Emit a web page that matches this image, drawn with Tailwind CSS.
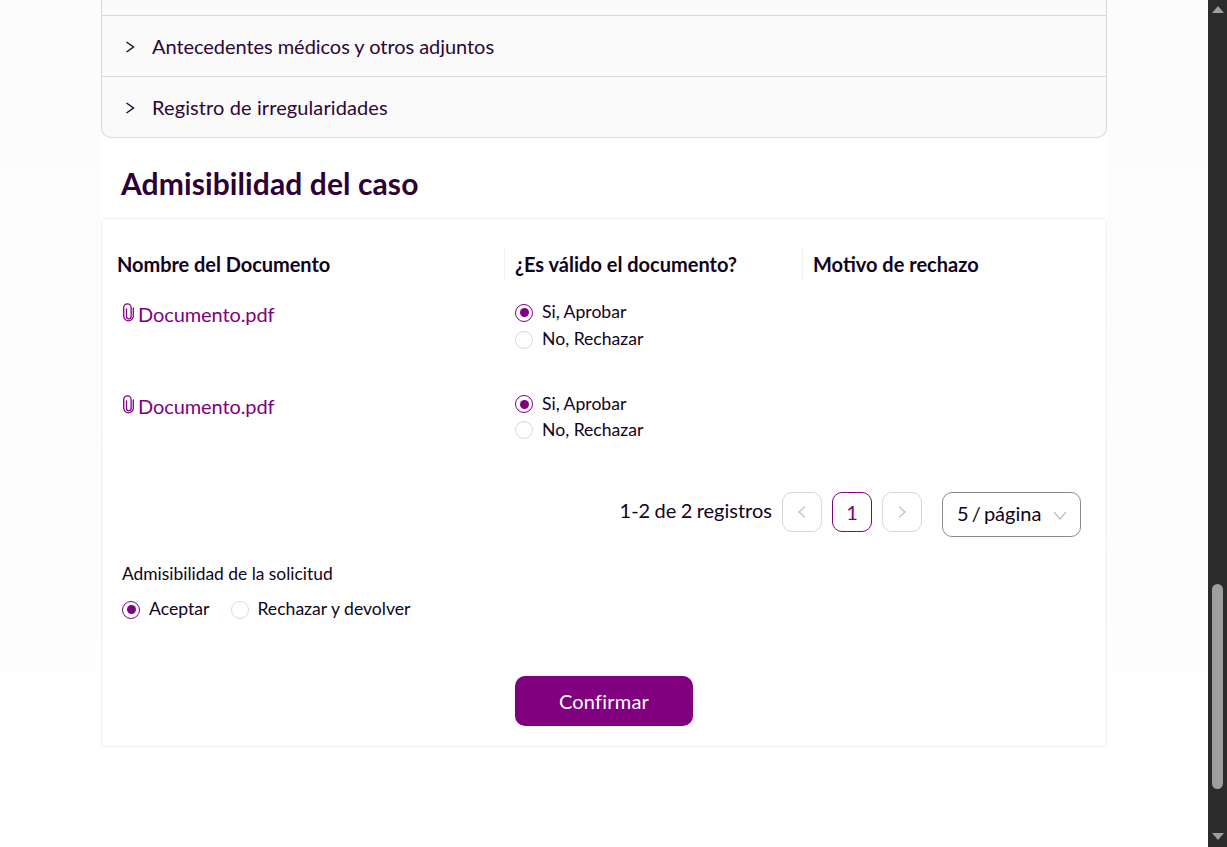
<!DOCTYPE html>
<html lang="es">
<head>
<meta charset="utf-8">
<script src="https://cdn.jsdelivr.net/npm/@tailwindcss/browser@4"></script>
</head>
<body class="overflow-hidden bg-white font-['Lato',sans-serif]">
<div class="flex h-[847px] w-[1227px]">
  <main class="h-full w-[1208px] pl-[101px] bg-gradient-to-b from-[#fcfcfc] via-[#fdfdfd] via-60% to-white">
    <div class="w-[1006px] bg-white">
      <section class="h-[138px] rounded-b-[10px] border border-t-0 border-[#d9d9d9] bg-[#fafafa] text-[20px] text-[#2d0636]">
        <div class="h-[16px] border-b border-[#d9d9d9]"></div>
        <div class="flex h-[61px] items-center border-b border-[#d9d9d9] pl-[22px]">
          <svg class="mr-[16px] mt-[2px] h-3 w-3 text-[#1f1030]" viewBox="0 0 12 12" fill="none" stroke="currentColor" stroke-width="1.5"><path d="M2.5 1 9.5 6 2.5 11"/></svg>
          <span class="tracking-[-0.05px]">Antecedentes médicos y otros adjuntos</span>
        </div>
        <div class="flex h-[60px] items-center pl-[22px]">
          <svg class="mr-[16px] mt-[2px] h-3 w-3 text-[#1f1030]" viewBox="0 0 12 12" fill="none" stroke="currentColor" stroke-width="1.5"><path d="M2.5 1 9.5 6 2.5 11"/></svg>
          <span class="tracking-[0.1px]">Registro de irregularidades</span>
        </div>
      </section>
      <h2 class="flex h-[80px] items-center pl-5 pt-[9px] text-[30px] font-bold leading-none tracking-[0.1px] text-[#2d0036]">Admisibilidad del caso</h2>
      <section class="h-[529px] rounded-[5px] border border-[#f0f0f0] bg-white text-[#10041c]">
        <div class="grid grid-cols-[402px_298px_1fr] pt-[29px] text-[20px] font-bold">
          <div class="flex h-[33px] items-center pb-[2px] pl-[15px] tracking-[-0.05px]">Nombre del Documento</div>
          <div class="flex h-[33px] items-center border-l border-[#f0f0f0] pb-[2px] pl-[10px]">¿Es válido el documento?</div>
          <div class="flex h-[33px] items-center border-l border-[#f0f0f0] pb-[2px] pl-[10px]">Motivo de rechazo</div>
        </div>
        <div class="grid h-[92px] grid-cols-[402px_1fr] pt-[13px]">
          <a class="flex items-start pl-[20px] pt-[5px] text-[20px] leading-[30px] tracking-[-0.1px] text-[#800080]">
            <svg class="mt-[3px] mr-[2px] h-[20px] w-[14px]" viewBox="0 0 14 20" fill="none" stroke="currentColor" stroke-width="1.3" stroke-linecap="round"><path d="M4.5 7v7.5a2.3 2.3 0 0 0 4.6 0V5.5a3.7 3.7 0 0 0-7.4 0v8.5a4.8 4.8 0 0 0 9.6 0V6"/></svg>
            Documento.pdf
          </a>
          <div class="pl-[11px] pt-[4px] text-[17.6px] leading-[27px]">
            <div class="flex h-[27px] items-center gap-[9px]"><span class="mt-[2px] flex h-[18px] w-[18px] items-center justify-center rounded-full border border-[#800080]"><span class="h-[9px] w-[9px] rounded-full bg-[#800080]"></span></span>Si, Aprobar</div>
            <div class="flex h-[27px] items-center gap-[9px]"><span class="mt-[2px] h-[18px] w-[18px] rounded-full border border-[#d9d9d9]"></span>No, Rechazar</div>
          </div>
        </div>
        <div class="grid h-[92px] grid-cols-[402px_1fr] pt-[13px]">
          <a class="flex items-start pl-[20px] pt-[5px] text-[20px] leading-[30px] tracking-[-0.1px] text-[#800080]">
            <svg class="mt-[3px] mr-[2px] h-[20px] w-[14px]" viewBox="0 0 14 20" fill="none" stroke="currentColor" stroke-width="1.3" stroke-linecap="round"><path d="M4.5 7v7.5a2.3 2.3 0 0 0 4.6 0V5.5a3.7 3.7 0 0 0-7.4 0v8.5a4.8 4.8 0 0 0 9.6 0V6"/></svg>
            Documento.pdf
          </a>
          <div class="pl-[11px] pt-[5px] text-[17.6px] leading-[26px]">
            <div class="flex h-[26px] items-center gap-[9px]"><span class="flex h-[18px] w-[18px] items-center justify-center rounded-full border border-[#800080]"><span class="h-[9px] w-[9px] rounded-full bg-[#800080]"></span></span>Si, Aprobar</div>
            <div class="flex h-[26px] items-center gap-[9px]"><span class="h-[18px] w-[18px] rounded-full border border-[#d9d9d9]"></span>No, Rechazar</div>
          </div>
        </div>
        <div class="flex items-start justify-end pr-[25px] pt-[27px] text-[20px]">
          <span class="mr-[10px] mt-[3px] leading-[30px] [word-spacing:-0.75px]">1-2 de 2 registros</span>
          <button class="flex h-[40px] w-[40px] items-center justify-center rounded-[10px] border border-[#d9d9d9] text-[#bfbfbf]"><svg class="h-[14px] w-[14px]" viewBox="0 0 14 14" fill="none" stroke="currentColor" stroke-width="1.3"><path d="M10 1.5 4 7l6 5.5"/></svg></button>
          <button class="ml-[10px] flex h-[40px] w-[40px] items-center justify-center rounded-[10px] border border-[#800080] text-[#800080]">1</button>
          <button class="ml-[10px] flex h-[40px] w-[40px] items-center justify-center rounded-[10px] border border-[#d9d9d9] text-[#bfbfbf]"><svg class="h-[14px] w-[14px]" viewBox="0 0 14 14" fill="none" stroke="currentColor" stroke-width="1.3"><path d="M4 1.5 10 7l-6 5.5"/></svg></button>
          <div class="ml-[20px] flex h-[45px] w-[139px] items-center justify-between rounded-[10px] border border-[#8c8c8c] pl-[14px] pr-[13px]">
            <span class="mb-[3px] [word-spacing:-2px]">5 / página</span>
            <svg class="h-[14px] w-[14px] text-[#bfbfbf]" viewBox="0 0 14 14" fill="none" stroke="currentColor" stroke-width="1.2"><path d="M1 4 7 11l6-7"/></svg>
          </div>
        </div>
        <div class="pl-[20px] pt-[24px] text-[17.4px] leading-[26px]">Admisibilidad de la solicitud</div>
        <div class="mt-[9px] flex h-[27px] items-center pl-[20px] text-[17.6px]">
          <span class="mr-[9px] flex h-[18px] w-[18px] items-center justify-center rounded-full border border-[#800080]"><span class="h-[9px] w-[9px] rounded-full bg-[#800080]"></span></span>
          <span>Aceptar</span>
          <span class="ml-[22px] mr-[8px] h-[18px] w-[18px] rounded-full border border-[#d9d9d9]"></span>
          <span>Rechazar y devolver</span>
        </div>
        <div class="flex justify-center pt-[53px]">
          <button class="h-[50px] w-[178px] rounded-[10px] bg-[#800080] text-[20px] tracking-[0.2px] text-white">Confirmar</button>
        </div>
      </section>
    </div>
  </main>
  <aside class="relative h-full w-[19px] bg-[#2b2b2b]">
    <div class="absolute left-[4px] top-[6px] h-0 w-0 border-x-[6px] border-b-[7px] border-x-transparent border-b-[#9e9e9e]"></div>
    <div class="absolute left-[4px] top-[584px] h-[205px] w-[11px] rounded-full bg-[#9e9e9e]"></div>
    <div class="absolute left-[4px] top-[833px] h-0 w-0 border-x-[6px] border-t-[7px] border-x-transparent border-t-[#9e9e9e]"></div>
  </aside>
</div>
</body>
</html>
